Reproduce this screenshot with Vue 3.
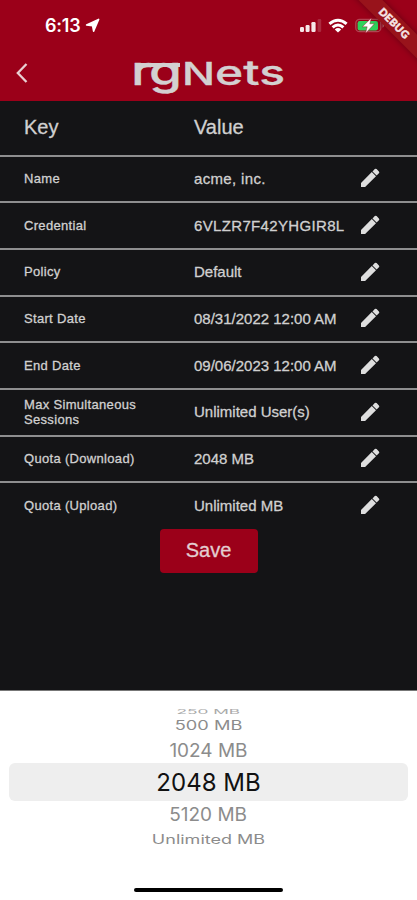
<script setup>
const rows = [
  { key: 'Name', value: 'acme, inc.', wide: true },
  { key: 'Credential', value: '6VLZR7F42YHGIR8L', wide: true },
  { key: 'Policy', value: 'Default' },
  { key: 'Start Date', value: '08/31/2022 12:00 AM' },
  { key: 'End Date', value: '09/06/2023 12:00 AM' },
  { key: 'Max Simultaneous Sessions', value: 'Unlimited User(s)' },
  { key: 'Quota (Download)', value: '2048 MB' },
  { key: 'Quota (Upload)', value: 'Unlimited MB' },
]
const options = [
  { label: '250 MB', cls: 'far' },
  { label: '500 MB', cls: 'mid' },
  { label: '1024 MB', cls: 'near above' },
  { label: '2048 MB', cls: 'selected' },
  { label: '5120 MB', cls: 'near below' },
  { label: 'Unlimited MB', cls: 'last' },
]
</script>

<template>
  <div class="screen">
    <header class="top">
      <div class="status">
        <span class="time">6:13</span>
        <svg class="loc" width="15" height="15" viewBox="0 0 15 15"><path d="M13.6 1.4 8.6 13.2 7.6 7.8 1.6 7Z" fill="#fff" stroke="#fff" stroke-width="1.6" stroke-linejoin="round" /></svg>
        <div class="spacer"></div>
        <svg class="signal" width="23" height="15" viewBox="0 0 23 15">
          <g fill="#f6e6e8">
            <rect x="0" y="8" width="4" height="5" rx="1.2" />
            <rect x="5.6" y="6" width="4" height="7" rx="1.2" />
            <rect x="11.4" y="3" width="4.2" height="10" rx="1.2" />
            <rect x="17.6" y="0" width="3.6" height="13" rx="1.2" opacity=".18" />
          </g>
        </svg>
        <svg class="wifi" width="20" height="15" viewBox="0 0 20 15">
          <g fill="none" stroke="#fff" stroke-width="3">
            <path d="M1.4 5.9Q10-1.4 18.6 5.9" />
            <path d="M4.6 9.4Q10 4.6 15.4 9.4" />
          </g>
          <path d="M6.8 11.4Q10 8.6 13.2 11.4L10 14.6Z" fill="#fff" />
        </svg>
        <svg class="battery" width="31" height="17" viewBox="0 0 31 17">
          <rect x=".8" y="2.3" width="25" height="12.4" rx="3.8" fill="none" stroke="#b04452" stroke-width="1.3" />
          <rect x="2.6" y="4" width="20.4" height="9.4" rx="2.2" fill="#2fd15b" />
          <path d="M27.5 6.2v4.6q1.7-.7 1.7-2.3t-1.7-2.3" fill="#b8606b" />
          <path d="M16.4.9 7.4 9.8h4.8L10.6 16.2l8.8-9.4h-4.6Z" fill="#fff" stroke="#9b0019" stroke-width=".4" />
        </svg>
      </div>
      <div class="bar">
        <svg class="back" width="14" height="22" viewBox="0 0 14 22"><path d="M11.5 2 2.8 11l8.7 9" fill="none" stroke="#e9cfd2" stroke-width="2.3" /></svg>
        <svg class="logo" width="156" height="60" viewBox="0 0 156 60">
          <rect x="8" y="16" width="41" height="4" />
          <text class="rg" x="0" y="38" textLength="21" lengthAdjust="spacingAndGlyphs">r</text>
          <text class="rg" x="18" y="38" textLength="33" lengthAdjust="spacingAndGlyphs">g</text>
          <text class="nets" x="51" y="38" textLength="103" lengthAdjust="spacingAndGlyphs"><tspan class="cap">N</tspan>ets</text>
        </svg>
      </div>
      <div class="ribbon"><span>DEBUG</span></div>
    </header>

    <main class="table">
      <div class="row head"><span>Key</span><span>Value</span></div>
      <div v-for="r in rows" :key="r.key" class="row">
        <span class="key">{{ r.key }}</span>
        <span class="value" :class="{ wide: r.wide }">{{ r.value }}</span>
        <svg class="pen" width="24" height="24" viewBox="0 0 24 24">
          <path d="M3 16.9V21h4.1L18 10.2l-4.2-4.2L3 16.9zM20.9 7.2a1.3 1.3 0 0 0 0-1.8l-2.3-2.3a1.3 1.3 0 0 0-1.8 0l-2.3 2.3 4.1 4.1 2.3-2.3z" />
        </svg>
      </div>
      <button class="save">Save</button>
    </main>

    <section class="picker">
      <div v-for="o in options" :key="o.label" class="option" :class="o.cls"><span>{{ o.label }}</span></div>
      <div class="home"></div>
    </section>
  </div>
</template>

<style>
body { background: #141416; }
</style>

<style scoped>
.screen {
  width: 417px;
  height: 900px;
  display: flex;
  flex-direction: column;
  overflow: hidden;
  background: #141416;
  font-family: "Liberation Sans", Arial, sans-serif;
}
.top {
  position: relative;
  height: 101px;
  box-sizing: border-box;
  overflow: hidden;
  background: #9b0019;
}
.status {
  display: flex;
  align-items: center;
  height: 50px;
  padding: 0 31px 0 45px;
}
.time {
  margin-top: 2px;
  font: 600 18px/20px Inter, sans-serif;
  letter-spacing: -0.2px;
  color: #fff;
}
.loc { margin-left: 4px; }
.spacer { flex: 1; }
.signal { margin-right: 5px; margin-top: 3px; }
.wifi { margin-right: 7px; }
.bar {
  display: flex;
  align-items: center;
  height: 46px;
  padding-left: 15px;
}
.logo { margin-left: 102px; margin-top: 8px; fill: #d3d0d1; }
.logo text {
  font-family: Inter, sans-serif;
  font-weight: 500;
  stroke: #d3d0d1;
  stroke-width: 0.3px;
}
.rg { font-size: 40px; }
.nets { font-size: 34px; }
.cap { font-size: 31px; }
.ribbon {
  position: absolute;
  top: 15px;
  right: -37px;
  width: 120px;
  height: 17px;
  transform: rotate(45deg);
  background: #98131b;
  box-shadow: 0 0 6px rgba(0, 0, 0, 0.35);
  text-align: center;
}
.ribbon span {
  display: block;
  font: 900 10.5px/17px Lato, sans-serif;
  letter-spacing: 0.4px;
  color: #f6e4e4;
  -webkit-text-stroke: 0.5px #f6e4e4;
}
.table {
  height: 589px;
  display: flex;
  flex-direction: column;
  flex: none;
}
.row {
  display: grid;
  grid-template-columns: 170px 164px 24px;
  align-items: center;
  box-sizing: border-box;
  height: 46.67px;
  flex: none;
  padding: 0 0 1px 24px;
  border-top: 2px solid #8e8e8f;
  color: #d0d0d0;
}
.head {
  height: 53.6px;
  padding-bottom: 0;
  border-top: 0;
  font-size: 20px;
  -webkit-text-stroke: 0.3px #d0d0d0;
}
.key {
  width: 125px;
  font-size: 13px;
  line-height: 15px;
  letter-spacing: 0.32px;
  -webkit-text-stroke: 0.3px #d0d0d0;
}
.value {
  font-size: 15px;
  white-space: nowrap;
  -webkit-text-stroke: 0.3px #d0d0d0;
}
.wide { letter-spacing: 0.34px; }
.pen { fill: #dedede; }
.save {
  align-self: center;
  width: 98px;
  height: 44px;
  margin-top: 1px;
  border: 0;
  border-radius: 4px;
  background: #9b0019;
  color: #e3cdd0;
  font: 20px "Liberation Sans", Arial, sans-serif;
  -webkit-text-stroke: 0.3px #e3cdd0;
}
.picker {
  flex: 1;
  display: flex;
  flex-direction: column;
  align-items: center;
  box-sizing: border-box;
  padding-top: 17px;
  border-top: 1px solid #777;
  background: #fff;
}
.option {
  display: flex;
  align-items: center;
  justify-content: center;
  width: 399px;
  color: #8c8c8c;
  font: 400 24px/1 Inter, sans-serif;
}
.option span { display: block; white-space: nowrap; }
.far { height: 7px; color: #aaa; }
.far span { transform: scale(0.72, 0.27); }
.mid { height: 21px; }
.mid span { transform: scale(0.76, 0.52); }
.near { height: 27px; }
.near span { transform: scale(0.79, 0.76); }
.above { box-sizing: border-box; padding-top: 2px; }
.selected {
  height: 38px;
  padding-top: 2px;
  box-sizing: border-box;
  border-radius: 6px;
  background: #eee;
  color: #111;
}
.below { height: 28px; }
.last { height: 21px; }
.last span { transform: scale(0.75, 0.52); }
.home {
  width: 149px;
  height: 4px;
  margin-top: 38px;
  border-radius: 2px;
  background: #000;
}
</style>
